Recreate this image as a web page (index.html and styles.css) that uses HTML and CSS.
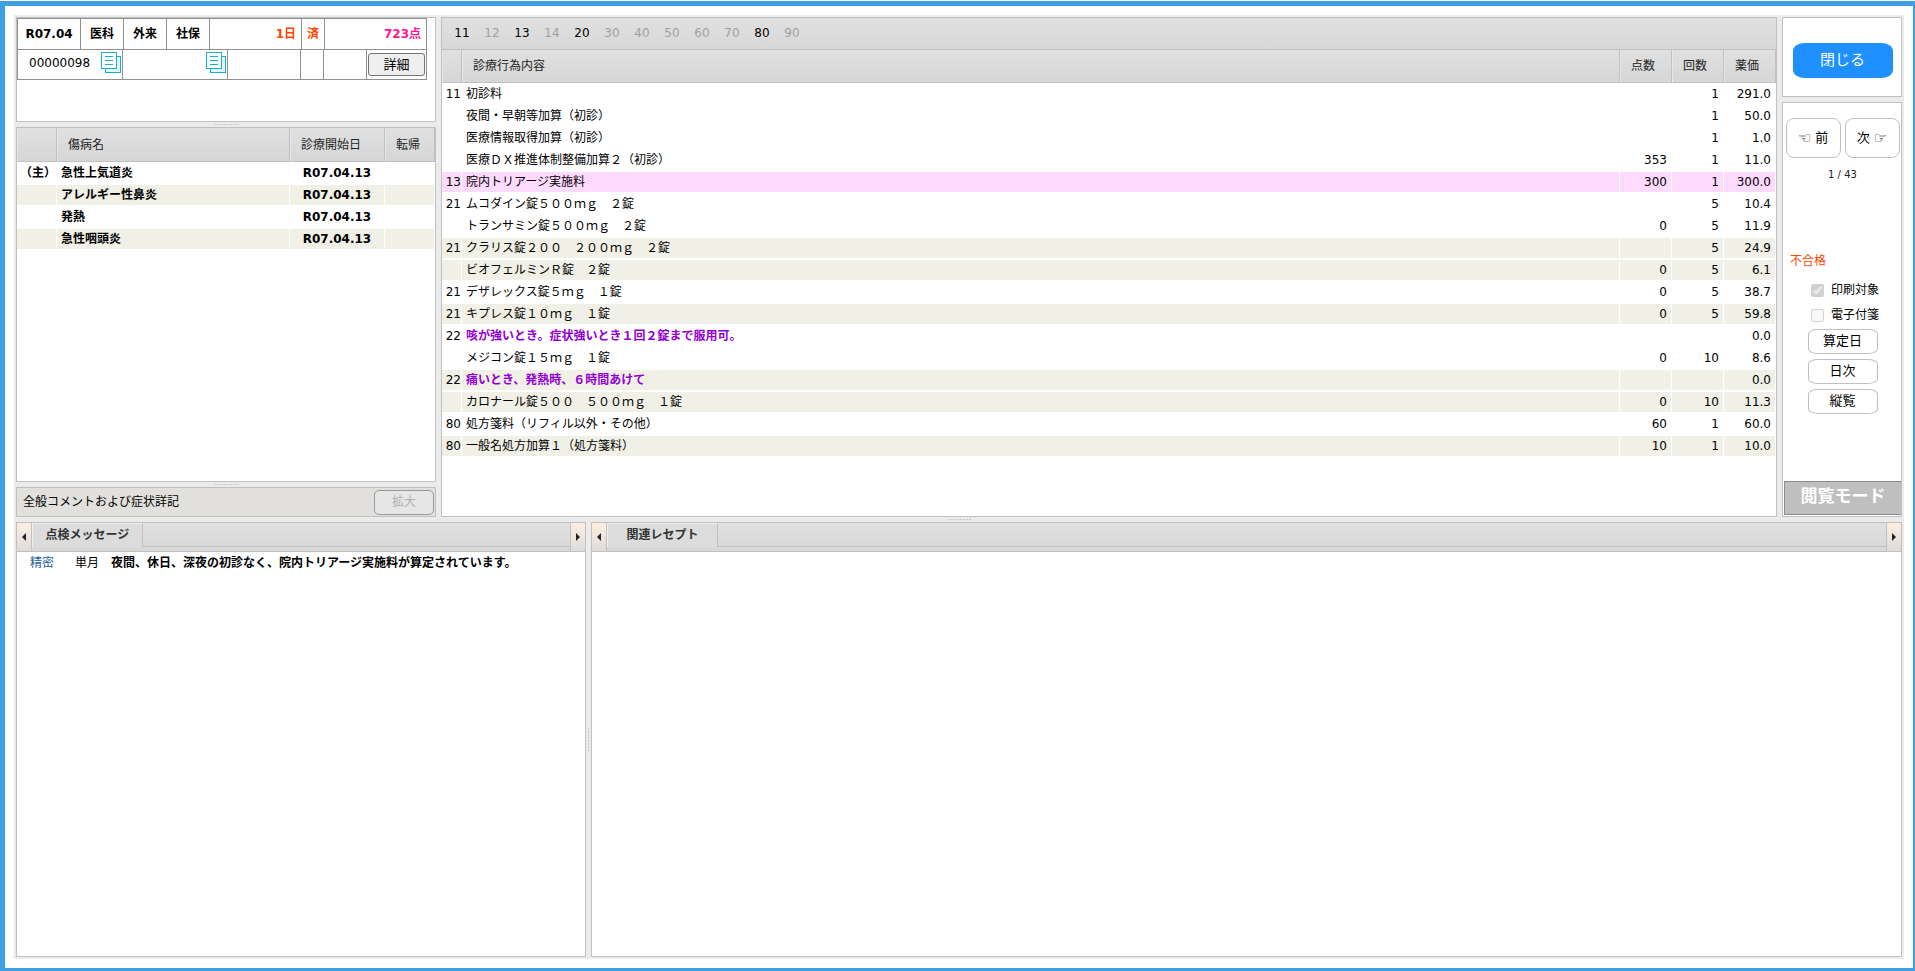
FILE: index.html
```html
<!DOCTYPE html>
<html lang="ja">
<head>
    <meta charset="UTF-8">
    <title>レセプト詳細</title>
    <link rel="stylesheet" href="styles.css">
</head>
<body>
    <div class="frame">
        <div class="layout">
            <div class="top">
                <div class="left-col">
                    <div class="panel summary">
                        <table class="summary-table">
                            <tr class="bold">
                                <td class="w-month">R07.04</td>
                                <td class="w-kind">医科</td>
                                <td class="w-kind">外来</td>
                                <td class="w-kind">社保</td>
                                <td class="right orange">1日</td>
                                <td class="w-done orange">済</td>
                                <td class="w-total right pink">723点</td>
                            </tr>
                        </table>
                        <table class="summary-table second">
                            <tr>
                                <td class="w-id">
                                    <div class="id-cell">
                                        <span>00000098</span>
                                        <button class="copy" aria-label="コピー">
                                            <svg width="20" height="21" viewBox="0 0 20 21" shape-rendering="crispEdges"><path d="M4.500 4.500H19.500V20.500H4.500Z" fill="#e4f8fb" stroke="#14b1c8"/><path d="M0.500 0.500H15.500V16.500H0.500Z" fill="#fff" stroke="#14b1c8"/><path d="M4 4.500H12M4 8.500H12M4 12.500H12" fill="none" stroke="#14b1c8"/></svg>
                                        </button>
                                    </div>
                                </td>
                                <td class="w-id">
                                    <div class="id-cell">
                                        <span></span>
                                        <button class="copy" aria-label="コピー">
                                            <svg width="20" height="21" viewBox="0 0 20 21" shape-rendering="crispEdges"><path d="M4.500 4.500H19.500V20.500H4.500Z" fill="#e4f8fb" stroke="#14b1c8"/><path d="M0.500 0.500H15.500V16.500H0.500Z" fill="#fff" stroke="#14b1c8"/><path d="M4 4.500H12M4 8.500H12M4 12.500H12" fill="none" stroke="#14b1c8"/></svg>
                                        </button>
                                    </div>
                                </td>
                                <td></td>
                                <td class="w-done"></td>
                                <td class="w-kind"></td>
                                <td class="w-detail"><button class="detail-btn">詳細</button></td>
                            </tr>
                        </table>
                    </div>
                    <div class="split-h"></div>
                    <div class="panel diseases">
                        <table class="grid">
                            <thead>
                                <tr>
                                    <th class="c-main"></th>
                                    <th>傷病名</th>
                                    <th class="c-date">診療開始日</th>
                                    <th class="c-outcome">転帰</th>
                                </tr>
                            </thead>
                            <tbody class="bold">
                                <tr><td class="code">（主）</td><td>急性上気道炎</td><td class="center">R07.04.13</td><td></td></tr>
                                <tr class="alt"><td></td><td>アレルギー性鼻炎</td><td class="center">R07.04.13</td><td></td></tr>
                                <tr><td></td><td>発熱</td><td class="center">R07.04.13</td><td></td></tr>
                                <tr class="alt"><td></td><td>急性咽頭炎</td><td class="center">R07.04.13</td><td></td></tr>
                            </tbody>
                        </table>
                    </div>
                    <div class="split-h"></div>
                    <div class="panel comment">
                        <span>全般コメントおよび症状詳記</span>
                        <button class="expand-btn" disabled>拡大</button>
                    </div>
                </div>

                <div class="panel acts">
                    <div class="codes">
                        <button>11</button>
                        <button disabled>12</button>
                        <button>13</button>
                        <button disabled>14</button>
                        <button>20</button>
                        <button disabled>30</button>
                        <button disabled>40</button>
                        <button disabled>50</button>
                        <button disabled>60</button>
                        <button disabled>70</button>
                        <button>80</button>
                        <button disabled>90</button>
                    </div>
                    <table class="grid">
                        <thead>
                            <tr>
                                <th class="c-code"></th>
                                <th>診療行為内容</th>
                                <th class="c-num">点数</th>
                                <th class="c-num">回数</th>
                                <th class="c-num">薬価</th>
                            </tr>
                        </thead>
                        <tbody>
                            <tr><td class="code">11</td><td>初診料</td><td class="num"></td><td class="num">1</td><td class="num">291.0</td></tr>
                            <tr><td class="code"></td><td>夜間・早朝等加算（初診）</td><td class="num"></td><td class="num">1</td><td class="num">50.0</td></tr>
                            <tr><td class="code"></td><td>医療情報取得加算（初診）</td><td class="num"></td><td class="num">1</td><td class="num">1.0</td></tr>
                            <tr><td class="code"></td><td>医療ＤＸ推進体制整備加算２（初診）</td><td class="num">353</td><td class="num">1</td><td class="num">11.0</td></tr>
                            <tr class="hit"><td class="code">13</td><td>院内トリアージ実施料</td><td class="num">300</td><td class="num">1</td><td class="num">300.0</td></tr>
                            <tr><td class="code">21</td><td>ムコダイン錠５００ｍｇ　２錠</td><td class="num"></td><td class="num">5</td><td class="num">10.4</td></tr>
                            <tr><td class="code"></td><td>トランサミン錠５００ｍｇ　２錠</td><td class="num">0</td><td class="num">5</td><td class="num">11.9</td></tr>
                            <tr class="alt"><td class="code">21</td><td>クラリス錠２００　２００ｍｇ　２錠</td><td class="num"></td><td class="num">5</td><td class="num">24.9</td></tr>
                            <tr class="alt"><td class="code"></td><td>ビオフェルミンＲ錠　２錠</td><td class="num">0</td><td class="num">5</td><td class="num">6.1</td></tr>
                            <tr><td class="code">21</td><td>デザレックス錠５ｍｇ　１錠</td><td class="num">0</td><td class="num">5</td><td class="num">38.7</td></tr>
                            <tr class="alt"><td class="code">21</td><td>キプレス錠１０ｍｇ　１錠</td><td class="num">0</td><td class="num">5</td><td class="num">59.8</td></tr>
                            <tr><td class="code">22</td><td class="note">咳が強いとき。症状強いとき１回２錠まで服用可。</td><td class="num"></td><td class="num"></td><td class="num">0.0</td></tr>
                            <tr><td class="code"></td><td>メジコン錠１５ｍｇ　１錠</td><td class="num">0</td><td class="num">10</td><td class="num">8.6</td></tr>
                            <tr class="alt"><td class="code">22</td><td class="note">痛いとき、発熱時、６時間あけて</td><td class="num"></td><td class="num"></td><td class="num">0.0</td></tr>
                            <tr class="alt"><td class="code"></td><td>カロナール錠５００　５００ｍｇ　１錠</td><td class="num">0</td><td class="num">10</td><td class="num">11.3</td></tr>
                            <tr><td class="code">80</td><td>処方箋料（リフィル以外・その他）</td><td class="num">60</td><td class="num">1</td><td class="num">60.0</td></tr>
                            <tr class="alt"><td class="code">80</td><td>一般名処方加算１（処方箋料）</td><td class="num">10</td><td class="num">1</td><td class="num">10.0</td></tr>
                        </tbody>
                    </table>
                </div>

                <div class="right-col">
                    <div class="panel close-box">
                        <button class="close-btn">閉じる</button>
                    </div>
                    <div class="panel side">
                        <div class="pager">
                            <button><span class="hand">☜</span>前</button>
                            <button>次<span class="hand">☞</span></button>
                        </div>
                        <div class="page-no">1 / 43</div>
                        <div class="result">不合格</div>
                        <div class="checks">
                            <label><input type="checkbox" checked disabled>印刷対象</label>
                            <label><input type="checkbox" disabled>電子付箋</label>
                        </div>
                        <div class="side-btns">
                            <button>算定日</button>
                            <button>日次</button>
                            <button>縦覧</button>
                        </div>
                        <div class="mode">閲覧モード</div>
                    </div>
                </div>
            </div>

            <div class="split-h"></div>

            <div class="bottom">
                <div class="panel messages">
                    <div class="tabbar">
                        <button class="scroll prev" aria-label="前のタブ"></button>
                        <div class="tabs"><button class="tab">点検メッセージ</button></div>
                        <button class="scroll next" aria-label="次のタブ"></button>
                    </div>
                    <div class="message">
                        <a href="#">精密</a>
                        <span class="period">単月</span>
                        <b>夜間、休日、深夜の初診なく、院内トリアージ実施料が算定されています。</b>
                    </div>
                </div>
                <div class="split-v"></div>
                <div class="panel related">
                    <div class="tabbar">
                        <button class="scroll prev" aria-label="前のタブ"></button>
                        <div class="tabs"><button class="tab">関連レセプト</button></div>
                        <button class="scroll next" aria-label="次のタブ"></button>
                    </div>
                </div>
            </div>
        </div>
    </div>
</body>
</html>
```
FILE: styles.css
```css
* {
    box-sizing: border-box;
}
body {
    margin: 0;
    padding-top: 1px;
    height: 100vh;
    background: #fff;
    color: #000;
    font-family: "DejaVu Sans", "Noto Sans CJK JP", sans-serif;
    font-size: 12px;
    line-height: 18px;
}
button {
    font-family: inherit;
    font-size: 12px;
    line-height: 18px;
    color: #000;
    padding: 0;
    cursor: pointer;
}
.frame {
    height: 100%;
    display: flex;
    border: solid #3ea0e2;
    border-width: 5px 2px 3px 5px;
    padding: 9px;
}
.layout {
    flex: 1;
    min-width: 0;
    display: flex;
    flex-direction: column;
    background: #ebebeb;
    padding: 2px;
}
.panel {
    background: #fff;
    border: 1px solid #c0c0c0;
    overflow: hidden;
}
.bold {
    font-weight: bold;
}
.top {
    flex: none;
    display: grid;
    grid-template-columns: 420px 1fr 120px;
    gap: 5px;
    height: 500px;
}
.left-col, .right-col {
    display: flex;
    flex-direction: column;
    min-height: 0;
}

/* Splitters with dotted grips */
.split-h {
    flex: none;
    height: 5px;
    background: repeating-linear-gradient(90deg, #c8c8c8 0 2px, #ebebeb 2px 3px) no-repeat center / 23px 1px;
}
.split-v {
    flex: none;
    width: 5px;
    background: repeating-linear-gradient(#c8c8c8 0 2px, #ebebeb 2px 3px) no-repeat center / 1px 23px;
}

/* Patient summary */
.summary {
    height: 105px;
}
.summary-table {
    table-layout: fixed;
    border-collapse: collapse;
    width: 410px;
}
.summary-table.second {
    margin-top: -1px;
}
.summary-table td {
    height: 31px;
    padding: 0 5px;
    border: 1px solid #909090;
    text-align: center;
}
.summary-table td.right {
    text-align: right;
}
.summary-table td.w-done {
    padding: 0;
}
.w-month { width: 63px; }
.w-kind { width: 43px; }
.w-done { width: 23px; }
.w-total { width: 102px; }
.w-id { width: 105px; }
.w-detail { width: 60px; }
.summary-table.second td {
    height: 30px;
    padding: 0 1px;
}
.orange {
    color: #ff4500;
}
.pink {
    color: #ff1493;
}
.id-cell {
    display: flex;
    justify-content: space-between;
    align-items: center;
    padding: 0 0 4px 10px;
}
.copy {
    border: none;
    background: none;
}
.copy svg {
    display: block;
}
.detail-btn {
    display: block;
    width: 57px;
    height: 23px;
    font-size: 13px;
    background: #efefef;
    border: 1px solid #767676;
    border-radius: 3px;
}

/* Lists */
.grid {
    width: 100%;
    table-layout: fixed;
    border-collapse: separate;
    border-spacing: 0;
}
.grid th {
    height: 34px;
    padding: 0 0 0 10px;
    text-align: left;
    font-weight: normal;
    color: #222;
    background: linear-gradient(#e0e0e0, #d6d6d6);
    border-left: 1px solid #e8e8e8;
    border-right: 1px solid #c0c0c0;
    border-bottom: 1px solid #c0c0c0;
}
.grid td {
    height: 22px;
    padding: 0 4px;
    line-height: 20px;
    border: solid #fff;
    border-width: 1px 1px 1px 0;
    white-space: nowrap;
}
.grid td.code {
    padding: 0;
    text-align: right;
}
.grid td.num {
    text-align: right;
}
.grid td.center {
    text-align: center;
}
.grid .alt td {
    background: #f0f0e6;
}
.grid .hit td {
    background: #ffdaff;
}
.grid td.note {
    color: #9400d3;
    font-weight: bold;
}
.c-main { width: 40px; }
.c-date { width: 95px; }
.c-outcome { width: 50px; }
.c-code { width: 20px; }
.c-num { width: 52px; }
.diseases {
    flex: 1;
    min-height: 0;
}
.comment {
    height: 30px;
    display: flex;
    justify-content: space-between;
    align-items: center;
    padding: 0 1px 0 6px;
    background: #e1e0dc;
}
.expand-btn {
    width: 60px;
    height: 25px;
    color: #b0b0b0;
    background: #e6e6e6;
    border: 1px solid #999;
    border-radius: 5px;
}
.codes {
    display: flex;
    align-items: center;
    height: 32px;
    padding: 0 5px 2px;
    background: linear-gradient(#e0e0e0, #d8d8d8);
    border-bottom: 1px solid #c0c0c0;
}
.codes button {
    width: 30px;
    border: none;
    background: none;
}
.codes button:disabled {
    color: #a0a0a0;
}
.acts .grid th {
    height: 33px;
}

/* Right side */
.right-col {
    gap: 5px;
}
.close-box {
    height: 80px;
    padding: 25px 0 0 1px;
    text-align: center;
}
.close-btn {
    width: 100px;
    height: 35px;
    padding-bottom: 2px;
    font-size: 15px;
    color: #fff;
    background: #1e90ff;
    border: none;
    border-radius: 12px / 8px;
}
.side {
    flex: 1;
    display: flex;
    flex-direction: column;
    padding: 15px 0 1px 1px;
}
.pager {
    display: flex;
    justify-content: center;
    gap: 4px;
}
.pager button {
    display: flex;
    justify-content: center;
    align-items: center;
    gap: 4px;
    width: 55px;
    height: 40px;
    font-size: 13px;
    background: #fff;
    border: 1px solid #c0c0c0;
    border-radius: 8px;
}
.hand {
    font-size: 15px;
    font-weight: bold;
}
.page-no {
    margin-top: 8px;
    font-size: 10px;
    text-align: center;
    color: #222;
}
.result {
    margin-top: 68px;
    padding-left: 6px;
    color: #ff4500;
}
.checks {
    display: flex;
    flex-direction: column;
    gap: 7px;
    margin-top: 11px;
    padding-left: 27px;
}
.checks label {
    display: flex;
    align-items: center;
}
.checks input {
    width: 13px;
    height: 13px;
    margin: 0 7px 0 0;
}
.side-btns {
    display: flex;
    flex-direction: column;
    align-items: center;
    gap: 5px;
    margin-top: 5px;
}
.side-btns button {
    width: 70px;
    height: 25px;
    padding-bottom: 2px;
    font-size: 13px;
    background: #fff;
    border: 1px solid #c0c0c0;
    border-radius: 10px / 5px;
}
.mode {
    height: 34px;
    margin-top: auto;
    border: 1px solid #8c8c8c;
    border-right: none;
    background: #bfbfbf;
    color: #fff;
    font-size: 17px;
    font-weight: bold;
    line-height: 28px;
    text-align: center;
}

/* Lower panels */
.bottom {
    flex: 1;
    min-height: 0;
    display: flex;
}
.messages {
    width: 570px;
}
.related {
    flex: 1;
}
.tabbar {
    display: flex;
    height: 29px;
    background: linear-gradient(#e0e0e0, #d8d8d8);
    border-bottom: 1px solid #c0c0c0;
}
.tabs {
    flex: 1;
    height: 24px;
    border-bottom: 1px solid #c0c0c0;
}
.tab {
    display: block;
    width: 111px;
    height: 24px;
    padding-bottom: 2px;
    font-weight: bold;
    color: #333;
    background: #dcdcdc;
    border: 1px solid #f0f0f0;
    border-right-color: #c0c0c0;
    border-bottom: none;
}
.scroll {
    display: flex;
    justify-content: center;
    align-items: center;
    width: 15px;
    background: linear-gradient(#ffeee0, #dcdcdc);
    border: none;
}
.scroll::before {
    content: "";
    border: 4px solid transparent;
}
.prev {
    border-right: 1px solid #c0c0c0;
}
.prev::before {
    border-left-width: 0;
    border-right-color: #222;
}
.next {
    border-left: 1px solid #c0c0c0;
}
.next::before {
    border-right-width: 0;
    border-left-color: #222;
}
.message {
    display: flex;
    padding: 1px 13px;
    line-height: 20px;
}
.message a {
    width: 45px;
    color: #2060a0;
    text-decoration: none;
}
.message .period {
    width: 36px;
}
```
